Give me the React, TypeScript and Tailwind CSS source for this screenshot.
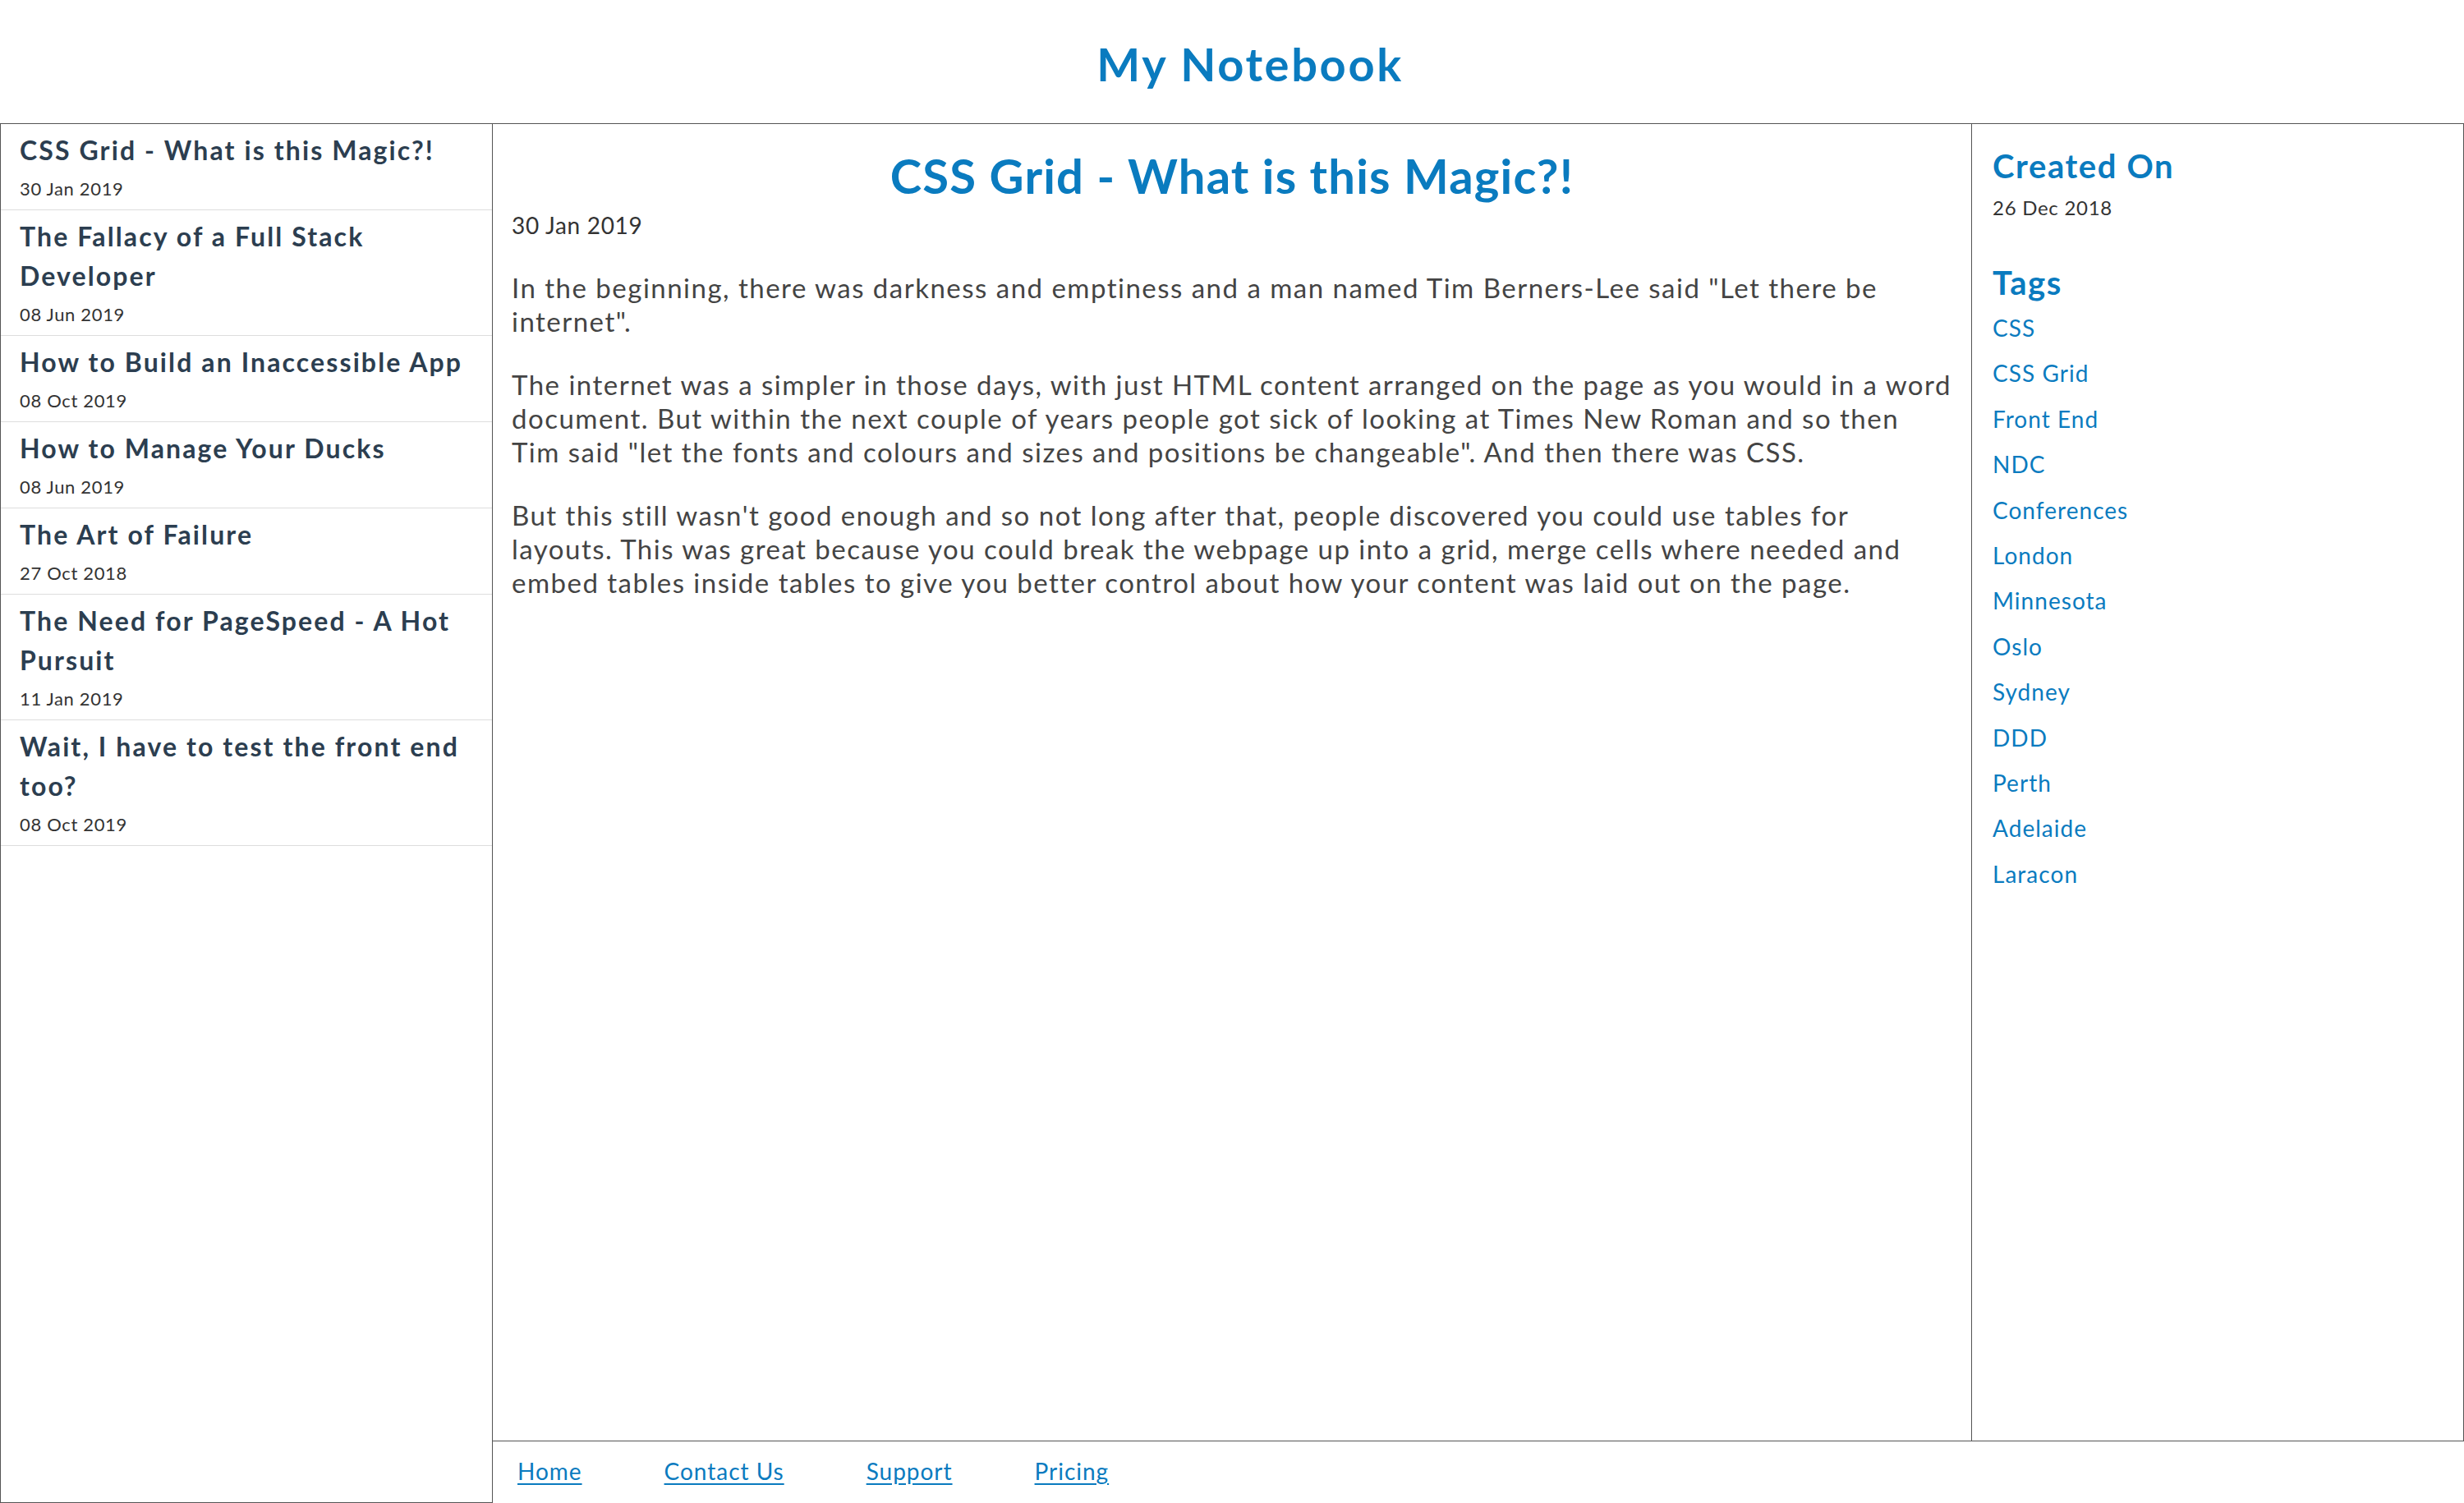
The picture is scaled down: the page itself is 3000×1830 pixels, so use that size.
const posts = [
  { title: "CSS Grid - What is this Magic?!", date: "30 Jan 2019" },
  { title: "The Fallacy of a Full Stack Developer", date: "08 Jun 2019" },
  { title: "How to Build an Inaccessible App", date: "08 Oct 2019" },
  { title: "How to Manage Your Ducks", date: "08 Jun 2019" },
  { title: "The Art of Failure", date: "27 Oct 2018" },
  { title: "The Need for PageSpeed - A Hot Pursuit", date: "11 Jan 2019" },
  { title: "Wait, I have to test the front end too?", date: "08 Oct 2019" },
];

const tags = [
  "CSS",
  "CSS Grid",
  "Front End",
  "NDC",
  "Conferences",
  "London",
  "Minnesota",
  "Oslo",
  "Sydney",
  "DDD",
  "Perth",
  "Adelaide",
  "Laracon",
];

const links = ["Home", "Contact Us", "Support", "Pricing"];

export default function App() {
  return (
    <div className="h-[1830px] grid grid-cols-[600px_1fr_600px] grid-rows-[151px_1fr_75px] bg-white font-['Lato',sans-serif]">
      <header className="col-span-3 border-b border-[#555] flex items-center justify-center pl-[44px]">
        <h1 className="text-[56px] font-bold text-[#0a7bbf] leading-none tracking-[0.047em] mt-[6px]">My Notebook</h1>
      </header>

      {/* post list */}
      <aside className="row-span-2 border-l border-r border-b border-[#555]">
        <ul>
          {posts.map((p) => (
            <li key={p.title} className="border-b border-[#ddd] px-[23px] pt-[8px] pb-[9px]">
              <h2 className="text-[32px] leading-[48px] font-bold tracking-[0.066em] text-[#2c3e50]">{p.title}</h2>
              <p className="mt-[6px] text-[22px] leading-[33px] tracking-[0.03em] text-[#333]">{p.date}</p>
            </li>
          ))}
        </ul>
      </aside>

      <main className="border-b border-[#555] px-[23px]">
        <h1 className="mt-[28px] text-center text-[58px] leading-[70px] font-bold tracking-[0.02em] text-[#0a7bbf]">
          CSS Grid - What is this Magic?!
        </h1>
        <p className="mt-[8px] text-[28px] leading-[34px] tracking-[0.025em] text-[#333]">30 Jan 2019</p>
        <div className="mt-[39px] text-[33px] leading-[41px] tracking-[0.045em] text-[#444]">
          <p className="mb-[36px]">
            In the beginning, there was darkness and emptiness and a man named Tim Berners-Lee said "Let there be
            internet".
          </p>
          <p className="mb-[36px]">
            The internet was a simpler in those days, with just HTML content arranged on the page as you would in a
            word document. But within the next couple of years people got sick of looking at Times New Roman and so
            then Tim said "let the fonts and colours and sizes and positions be changeable". And then there was CSS.
          </p>
          <p>
            But this still wasn't good enough and so not long after that, people discovered you could use tables for
            layouts. This was great because you could break the webpage up into a grid, merge cells where needed and
            embed tables inside tables to give you better control about how your content was laid out on the page.
          </p>
        </div>
      </main>

      {/* meta */}
      <aside className="border-l border-r border-b border-[#555] pl-[25px]">
        <h3 className="mt-[27px] text-[40px] leading-[48px] font-bold tracking-[0.04em] text-[#0a7bbf]">Created On</h3>
        <p className="mt-[12px] text-[24px] leading-[29px] tracking-[0.03em] text-[#333]">26 Dec 2018</p>
        <h3 className="mt-[53px] text-[40px] leading-[48px] font-bold tracking-[0.04em] text-[#0a7bbf]">Tags</h3>
        <ul className="mt-[4px]">
          {tags.map((t) => (
            <li key={t} className="text-[28px] leading-[55.4px] tracking-[0.037em] text-[#0a7bbf]">
              {t}
            </li>
          ))}
        </ul>
      </aside>

      <footer className="col-start-2 col-span-2 flex gap-[100px] pl-[30px] pt-[19px]">
        {links.map((l) => (
          <a
            key={l}
            href="#"
            className="text-[28px] leading-[34px] tracking-[0.035em] text-[#0a7bbf] underline underline-offset-4 h-fit"
          >
            {l}
          </a>
        ))}
      </footer>
    </div>
  );
}
